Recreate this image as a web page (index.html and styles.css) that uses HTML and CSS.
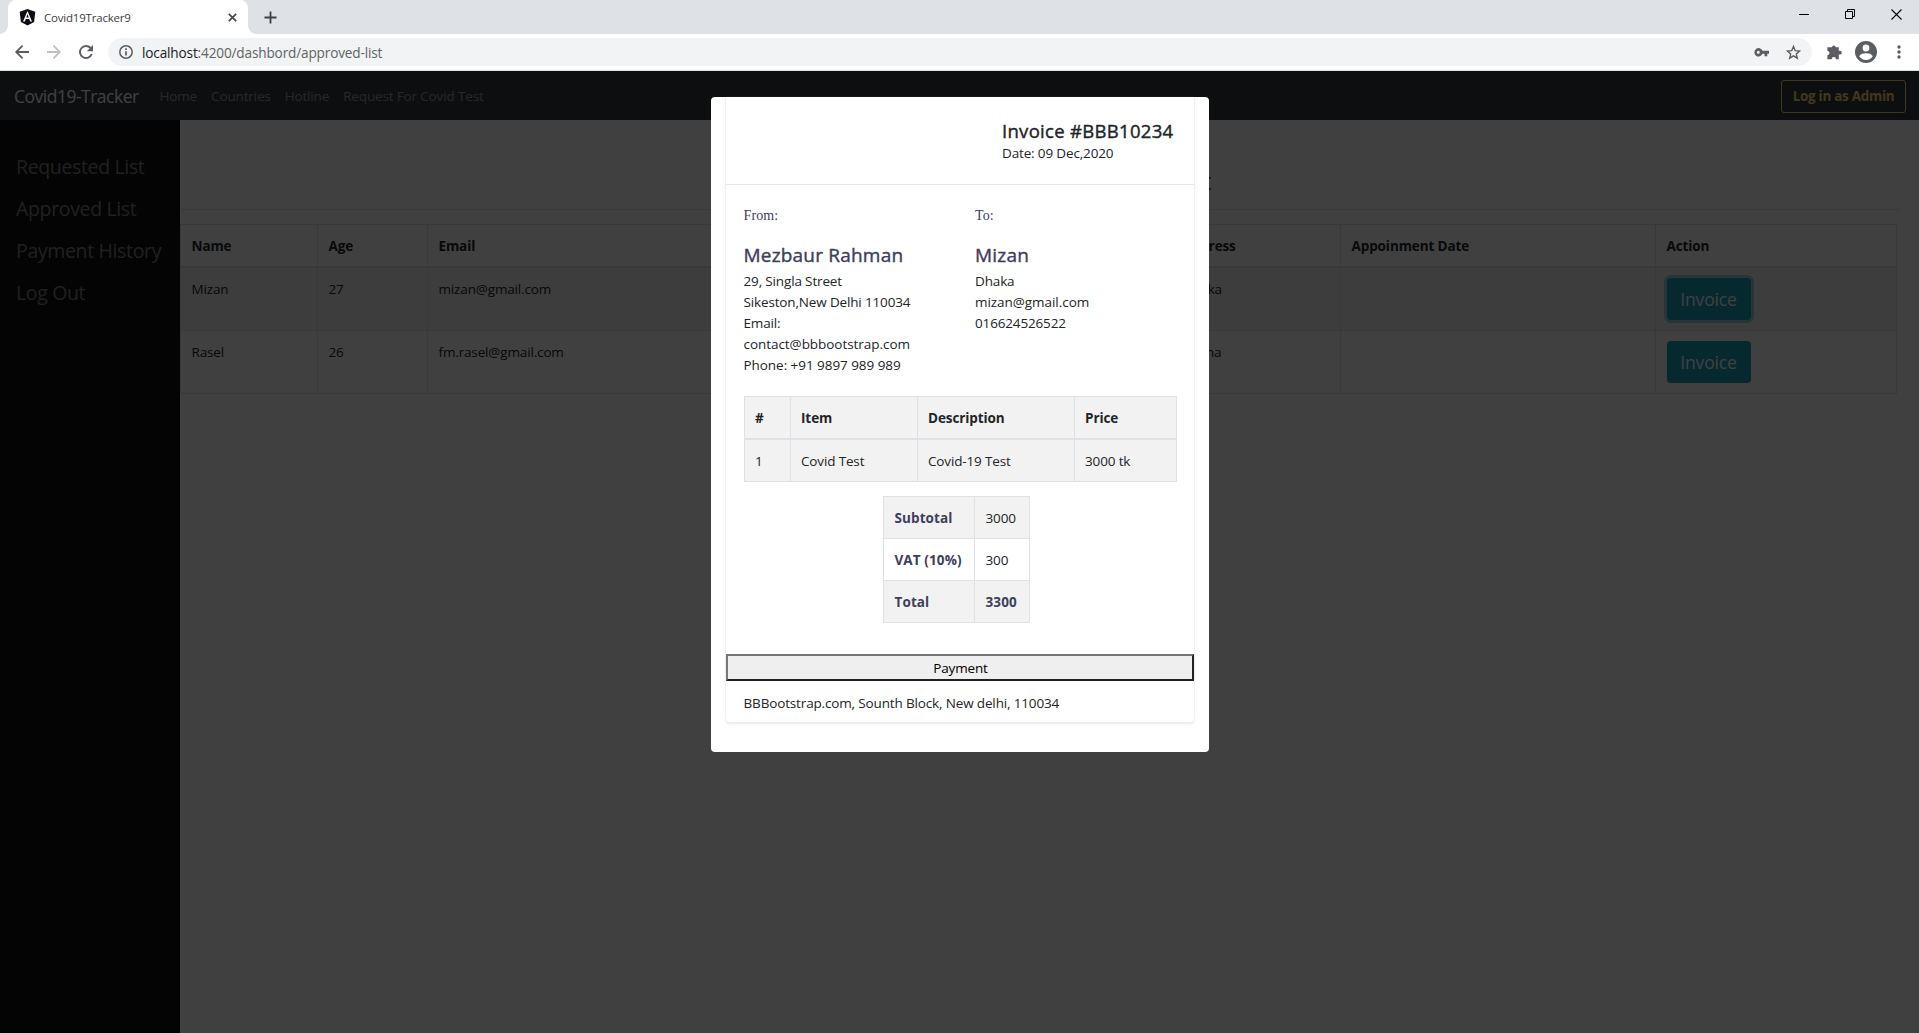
FILE: index.html
```html
<!DOCTYPE html>
<html lang="en">
<head>
<meta charset="utf-8">
<title>Covid19Tracker9</title>
<link rel="stylesheet" href="styles.css">
</head>
<body>
<div class="browser">
  <div class="tabstrip">
    <div class="tab">
      <svg class="favicon" width="17" height="17" viewBox="0 0 17 17"><path d="M8.5 0 16.3 2.8 15.1 13 8.5 16.6 1.9 13 .7 2.8z" fill="#0b1018"/><path d="M8.5 1.9 4 12.4h1.8l1-2.3h3.4l1 2.3H13zm0 3.2 1.2 3.5H7.3z" fill="#fff"/></svg>
      <span class="tab-title">Covid19Tracker9</span>
      <svg width="9" height="9" viewBox="0 0 9 9" class="tab-close"><path d="M.8.8l7.4 7.4M8.2.8.8 8.2" stroke="#45494d" stroke-width="1.7"/></svg>
    </div>
    <svg class="new-tab" width="13" height="13" viewBox="0 0 13 13"><path d="M6.5.5v12M.5 6.5h12" stroke="#3c4043" stroke-width="1.8"/></svg>
    <div class="window-buttons">
      <svg width="10" height="10" viewBox="0 0 10 10"><path d="M0 5.5h10" stroke="#000"/></svg>
      <svg width="10" height="10" viewBox="0 0 10 10"><path d="M.5 2.5h7v7h-7zM2.5 2.5v-2h7v7h-2" fill="none" stroke="#000"/></svg>
      <svg width="11" height="11" viewBox="0 0 11 11"><path d="M.5.5l10 10M10.5.5l-10 10" stroke="#000" stroke-width="1.1"/></svg>
    </div>
  </div>
  <div class="toolbar">
    <svg class="tool" width="14" height="14" viewBox="0 0 14 14"><path d="M14 7H1.500M7.500.7 1.200 7l6.300 6.300" fill="none" stroke="#5a5e63" stroke-width="1.800"/></svg>
    <svg class="tool" width="14" height="14" viewBox="0 0 14 14"><path d="M0 7h12.500M6.500.7 12.800 7l-6.300 6.300" fill="none" stroke="#bdbfc1" stroke-width="1.800"/></svg>
    <svg class="tool" width="14" height="14" viewBox="0 0 14 14"><path d="M12.700 9A6 6 0 1 1 11.500 3" fill="none" stroke="#5a5e63" stroke-width="1.900"/><path d="M14 0v6.200H7.800z" fill="#5a5e63"/></svg>
    <div class="omnibox">
      <svg width="14" height="14" viewBox="0 0 14 14"><circle cx="7" cy="7" r="6.200" fill="none" stroke="#5a5e63" stroke-width="1.500"/><path d="M7 6.200v4.300M7 3.300v1.700" stroke="#5a5e63" stroke-width="1.700"/></svg>
      <span class="url"><b>localhost</b>:4200/dashbord/approved-list</span>
      <svg class="key" width="15" height="9" viewBox="0 0 15 9"><path fill-rule="evenodd" d="M8.500 2.800A4.200 4.200 0 1 0 8.500 5.800H10.500v2.500h2.800V5.800H15V2.800zM4.300 2.800a1.500 1.500 0 1 1 0 3 1.500 1.500 0 0 1 0-3z" fill="#5a5e63"/></svg>
      <svg class="star" width="15" height="15" viewBox="0 0 15 15"><path d="M7.500 1.500 9.200 5.600l4.400.4-3.300 2.900 1 4.300-3.800-2.300-3.800 2.300 1-4.300L1.400 6l4.400-.4z" fill="none" stroke="#5a5e63" stroke-width="1.400"/></svg>
    </div>
    <svg class="puzzle" width="15" height="15" viewBox="0 0 15 15"><path d="M5 2.300a1.800 1.800 0 0 1 3.600 0h3.200V5.800h1.100a1.900 1.900 0 0 1 0 3.800h-1.100v4.600H8.900a2.100 2.100 0 0 0-4.200 0H.4V10.200a2.100 2.100 0 0 0 0-4.200V2.300z" fill="#5a5e63"/></svg>
    <svg class="avatar" width="22" height="22" viewBox="0 0 22 22"><circle cx="11" cy="11" r="11" fill="#5a5e63"/><circle cx="11" cy="7" r="3.400" fill="#fff"/><path d="M4.200 15.200C5.500 12.800 8.500 12.200 11 12.200s5.500.6 6.800 3C16.300 17.600 13.800 19 11 19s-5.300-1.400-6.800-3.800z" fill="#fff"/></svg>
    <svg width="4" height="14" viewBox="0 0 4 14"><g fill="#5a5e63"><circle cx="2" cy="2" r="1.700"/><circle cx="2" cy="7" r="1.700"/><circle cx="2" cy="12" r="1.700"/></g></svg>
  </div>
</div>

<div class="viewport">
  <nav class="navbar">
    <span class="brand">Covid19-Tracker</span>
    <span class="nav-link">Home</span>
    <span class="nav-link">Countries</span>
    <span class="nav-link">Hotline</span>
    <span class="nav-link">Request For Covid Test</span>
    <button class="admin-btn">Log in as Admin</button>
  </nav>
  <div class="layout">
    <aside class="sidebar">
      <a>Requested List</a>
      <a>Approved List</a>
      <a>Payment History</a>
      <a>Log Out</a>
    </aside>
    <main class="content">
      <h3 class="page-title">Approved List</h3>
      <table class="patients">
        <colgroup><col style="width:137px"><col style="width:110px"><col style="width:360px"><col style="width:384px"><col style="width:169px"><col style="width:315px"><col style="width:241px"></colgroup>
        <thead><tr><th>Name</th><th>Age</th><th>Email</th><th></th><th>Address</th><th>Appoinment Date</th><th>Action</th></tr></thead>
        <tbody>
          <tr><td>Mizan</td><td>27</td><td>mizan@gmail.com</td><td></td><td>Dhaka</td><td></td><td><button class="invoice-btn focused">Invoice</button></td></tr>
          <tr><td>Rasel</td><td>26</td><td>fm.rasel@gmail.com</td><td></td><td>Pabna</td><td></td><td><button class="invoice-btn">Invoice</button></td></tr>
        </tbody>
      </table>
    </main>
  </div>

  <div class="backdrop">
    <section class="modal">
      <div class="card">
        <header class="card-header">
          <div class="invoice-no">
            <h3>Invoice #BBB10234</h3>
            <div>Date: 09 Dec,2020</div>
          </div>
        </header>
        <div class="card-body">
          <div class="parties">
            <div class="party">
              <h5>From:</h5>
              <h3>Mezbaur Rahman</h3>
              <div>29, Singla Street</div>
              <div>Sikeston,New Delhi 110034</div>
              <div>Email:</div>
              <div class="loose">contact@bbbootstrap.com</div>
              <div class="loose">Phone: +91 9897 989 989</div>
            </div>
            <div class="party">
              <h5>To:</h5>
              <h3>Mizan</h3>
              <div>Dhaka</div>
              <div class="loose">mizan@gmail.com</div>
              <div>016624526522</div>
            </div>
          </div>
          <table class="items">
            <colgroup><col style="width:46px"><col style="width:127px"><col style="width:157px"><col style="width:102px"></colgroup>
            <thead><tr><th>#</th><th>Item</th><th>Description</th><th>Price</th></tr></thead>
            <tbody><tr><td>1</td><td>Covid Test</td><td>Covid-19 Test</td><td>3000 tk</td></tr></tbody>
          </table>
          <table class="totals">
            <colgroup><col style="width:91px"><col style="width:55px"></colgroup>
            <tr><td><strong>Subtotal</strong></td><td>3000</td></tr>
            <tr><td><strong>VAT (10%)</strong></td><td>300</td></tr>
            <tr><td><strong>Total</strong></td><td><strong>3300</strong></td></tr>
          </table>
        </div>
        <button class="payment">Payment</button>
        <footer class="card-footer">BBBootstrap.com, Sounth Block, New delhi, 110034</footer>
      </div>
    </section>
  </div>
</div>
</body>
</html>
```
FILE: styles.css
```css
* { box-sizing: border-box; }
html, body { height: 100%; }
body {
  margin: 0;
  display: flex;
  flex-direction: column;
  overflow: hidden;
  background: #fff;
  color: #212529;
  font: 13.5px/21px "Open Sans", "Noto Sans", sans-serif;
  letter-spacing: -0.15px;
}
svg { display: block; flex: none; }
h3, h5 { margin: 0; font-weight: 500; }
button { font-family: inherit; letter-spacing: inherit; }

/* Browser window */
.browser { flex: none; }
.tabstrip { display: flex; align-items: center; height: 34px; background: #dee1e6; padding-left: 8px; }
.tab {
  position: relative;
  display: flex;
  align-items: center;
  width: 240px;
  height: 34px;
  padding: 0 11px 0 11px;
  border-radius: 8px 8px 0 0;
  background: #fff;
  font-size: 11.5px;
  color: #3c4043;
}
.tab::before, .tab::after {
  content: "";
  position: absolute;
  bottom: 0;
  width: 8px;
  height: 8px;
}
.tab::before { left: -8px; background: radial-gradient(circle at 0 0, #dee1e6 7.5px, #fff 8px); }
.tab::after { right: -8px; background: radial-gradient(circle at 100% 0, #dee1e6 7.5px, #fff 8px); }
.tab-title { margin-left: 8px; letter-spacing: -0.2px; }
.tab-close { margin-left: auto; }
.new-tab { margin-left: 16px; }
.window-buttons { display: flex; align-items: center; gap: 36px; margin: -6px 17px 0 auto; }
.toolbar { display: flex; align-items: center; height: 37px; padding: 0 18px 0 15px; border-bottom: 1px solid #dce3e3; }
.tool { margin-right: 18px; }
.omnibox {
  display: flex;
  align-items: center;
  flex: 1;
  height: 28px;
  margin-left: -3px;
  padding: 0 11px;
  border-radius: 14px;
  background: #f1f3f4;
  font-size: 13.6px;
  letter-spacing: -0.15px;
  color: #5f6368;
}
.url { margin-left: 9px; }
.url b { font-weight: 400; color: #202124; }
.key { margin-left: auto; }
.star { margin-left: 17px; }
.puzzle { margin-left: 15px; }
.avatar { margin: 0 20px 0 13px; }

/* Application */
.viewport { position: relative; flex: 1; display: flex; flex-direction: column; }
.navbar { display: flex; align-items: center; height: 49px; padding: 1px 13px 0 14px; background: #343a40; }
.brand { width: 125px; margin-right: 20.5px; font-size: 17.5px; letter-spacing: -0.5px; color: #fff; white-space: nowrap; }
.nav-link { margin-right: 14px; color: rgba(255,255,255,.5); white-space: nowrap; }
.admin-btn {
  margin-left: auto;
  width: 125px;
  height: 33px;
  padding: 0;
  border: 1px solid #ffdb7d;
  border-radius: 3px;
  background: transparent;
  color: #ffdb7d;
  font-size: 13.5px;
  font-weight: 700;
  letter-spacing: -0.3px;
}
.layout { flex: 1; display: flex; }
.sidebar { width: 180px; padding: 26px 16px; background: #111; font-size: 19.5px; letter-spacing: -0.35px; color: #818181; }
.sidebar a { display: block; line-height: 42px; white-space: nowrap; }
.content { flex: 1; padding-right: 19px; }
.page-title {
  height: 90px;
  padding: 44px 689px 0 0;
  border-bottom: 1px solid #e5e5e5;
  text-align: right;
  font-size: 24.5px;
  line-height: 34px;
}
table { border-collapse: collapse; table-layout: fixed; }
th, td { border: 1px solid #dee2e6; padding: 11px 10.5px 9px; text-align: left; vertical-align: top; }
th { font-weight: 700; letter-spacing: -0.1px; }
thead th { border-bottom-width: 2px; }
.patients { width: 1717px; margin-top: 14px; }
.patients td { height: 63px; }
.patients tbody tr:first-child { background: #f2f2f2; }
.invoice-btn {
  display: block;
  width: 84px;
  height: 42px;
  margin: -1px 0 1px;
  padding: 0;
  border: 0;
  border-radius: 4px;
  background: #17a2b8;
  color: #fff;
  font-size: 17.5px;
}
.focused { box-shadow: 0 0 0 3px rgba(58,176,195,.5); }

/* Invoice dialog */
.backdrop { position: absolute; inset: 0; display: flex; justify-content: center; align-items: flex-start; padding-top: 26px; background: rgba(0,0,0,.75); }
.modal { width: 498px; height: 655px; margin-left: 1px; padding: 0 15px; border-radius: 4px; background: #fff; }
.card { height: 625px; border-radius: 0 0 4px 4px; box-shadow: 0 1px 2px 1px rgba(154,154,204,.22); }
.card-header { display: flex; justify-content: flex-end; height: 88px; padding: 22px 21px 0 0; border-bottom: 1px solid #e6e6f2; }
.invoice-no { width: 171px; white-space: nowrap; }
.invoice-no h3 { font-size: 18.5px; line-height: 24px; letter-spacing: 0.3px; -webkit-text-stroke: 0.4px; }
.card-body { padding: 20px 18px 0 17.5px; }
.parties { display: grid; grid-template-columns: 231.5px 1fr; height: 191px; }
.party h5 { margin-bottom: 18px; font: 14px/21px "Liberation Serif", serif; letter-spacing: 0.1px; color: #3d405c; }
.party h3 { margin-bottom: 4px; font-size: 19px; line-height: 23px; letter-spacing: 0.2px; color: #3d405c; -webkit-text-stroke: 0.4px; }
.loose { letter-spacing: -0.05px; }
.items { width: 433px; background: #f2f2f2; }
.totals { width: 147px; margin: 14px 0 0 139px; }
.totals tr:nth-child(odd) { background: #f2f2f2; }
.totals td { padding-left: 11px; }
.totals strong { letter-spacing: 0.1px; color: #3d405c; }
.payment { display: block; width: 100%; height: 27px; margin-top: 31px; padding: 1px 0 0 1px; border: 2px solid; border-color: #767676 #212121 #212121 #767676; background: #efefef; color: #000; font-size: 13.5px; line-height: 21px; }
.card-footer { padding: 12px 17.5px; }
```
